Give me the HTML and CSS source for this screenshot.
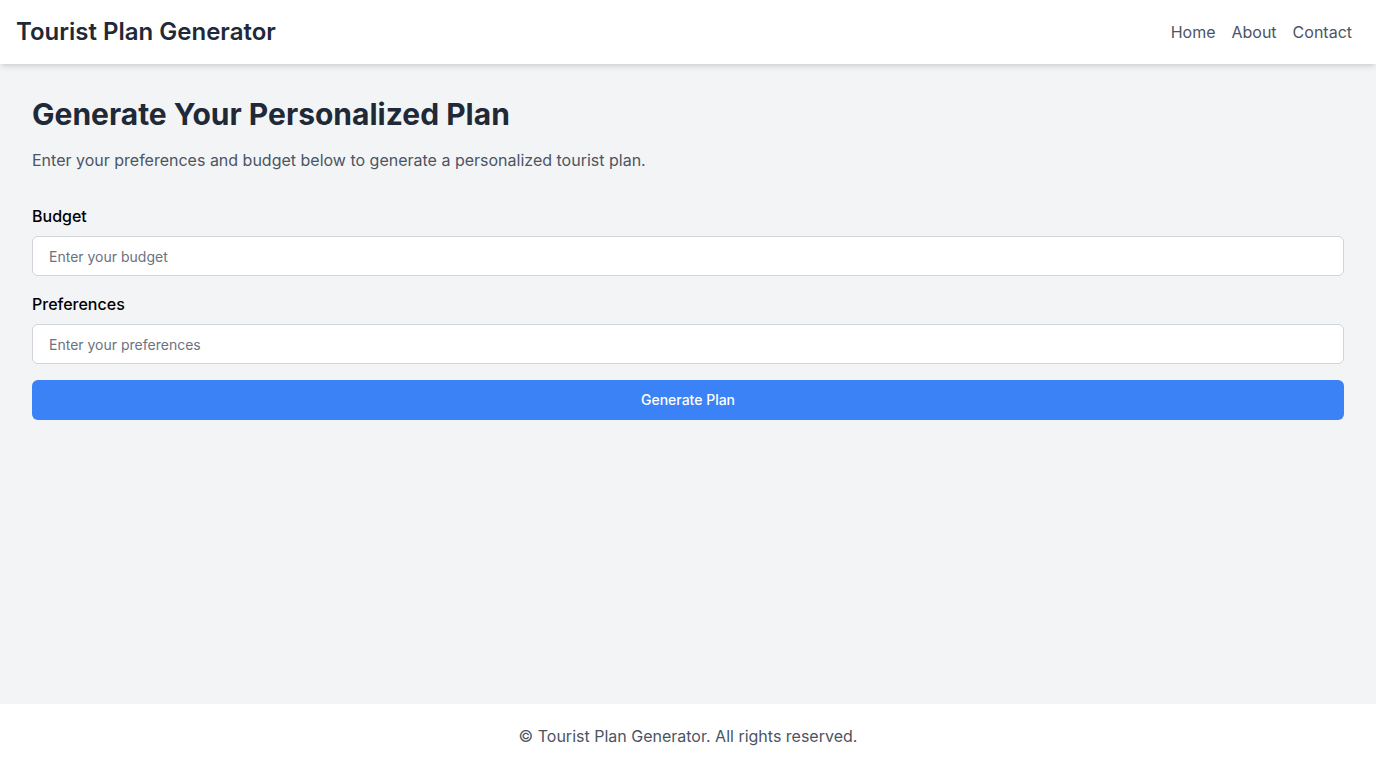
FILE: index.html
```html
<!DOCTYPE html>
<html lang="en">
<head>
<meta charset="utf-8">
<title>Tourist Plan Generator</title>
<link rel="stylesheet" href="styles.css">
</head>
<body>
<div class="page">
  <header class="header">
    <h1 class="brand">Tourist Plan Generator</h1>
    <nav class="nav">
      <a href="#">Home</a>
      <a href="#">About</a>
      <a href="#">Contact</a>
    </nav>
  </header>
  <main class="main">
    <h2 class="title">Generate Your Personalized Plan</h2>
    <p class="intro">Enter your preferences and budget below to generate a personalized tourist plan.</p>
    <form class="form">
      <div class="field">
        <label class="label" for="budget">Budget</label>
        <input class="input" id="budget" type="text" placeholder="Enter your budget">
      </div>
      <div class="field">
        <label class="label" for="prefs">Preferences</label>
        <input class="input" id="prefs" type="text" placeholder="Enter your preferences">
      </div>
      <button class="button" type="button">Generate Plan</button>
    </form>
  </main>
  <footer class="footer">
    <p>© Tourist Plan Generator. All rights reserved.</p>
  </footer>
</div>
</body>
</html>
```

FILE: styles.css
```css
* { box-sizing: border-box; }
html, body { margin: 0; padding: 0; }
body {
  font-family: Inter, "Noto Sans", sans-serif;
  background: #f3f4f6;
  color: #111827;
}
.page {
  min-height: 100vh;
  display: flex;
  flex-direction: column;
}
.header {
  background: #fff;
  box-shadow: 0 4px 6px -1px rgba(0,0,0,0.1), 0 2px 4px -2px rgba(0,0,0,0.1);
  padding: 16px 24px 16px 16px;
  display: flex;
  justify-content: space-between;
  align-items: center;
  position: relative;
  z-index: 1;
}
.brand {
  margin: 0;
  font-size: 24px;
  line-height: 32px;
  font-weight: 600;
  color: #1f2937;
}
.nav {
  display: flex;
  gap: 16px;
}
.nav a {
  color: #4b5563;
  text-decoration: none;
  font-size: 16px;
  line-height: 24px;
}
.main {
  flex: 1;
  padding: 32px;
}
.title {
  margin: 0 0 16px;
  font-size: 30px;
  line-height: 36px;
  font-weight: 700;
  color: #1f2937;
}
.intro {
  margin: 0 0 32px;
  font-size: 16px;
  line-height: 24px;
  color: #4b5563;
}
.field { margin-bottom: 16px; }
.label {
  display: block;
  margin-bottom: 8px;
  font-size: 16px;
  line-height: 24px;
  font-weight: 500;
  color: #000;
}
.input {
  display: block;
  width: 100%;
  height: 40px;
  padding: 8px 16px;
  border: 1px solid #d1d5db;
  border-radius: 6px;
  background: #fff;
  font-family: inherit;
  font-size: 14px;
  color: #111827;
}
.input::placeholder { color: #6b7280; }
.button {
  display: block;
  width: 100%;
  height: 40px;
  padding: 0 0 1px;
  border: 0;
  border-radius: 6px;
  background: #3b82f6;
  color: #fff;
  font-family: inherit;
  font-size: 14px;
  line-height: 20px;
  font-weight: 500;
}
.footer {
  background: #fff;
  padding: 20px;
  text-align: center;
}
.footer p {
  margin: 0;
  font-size: 16px;
  line-height: 24px;
  color: #4b5563;
}
```
